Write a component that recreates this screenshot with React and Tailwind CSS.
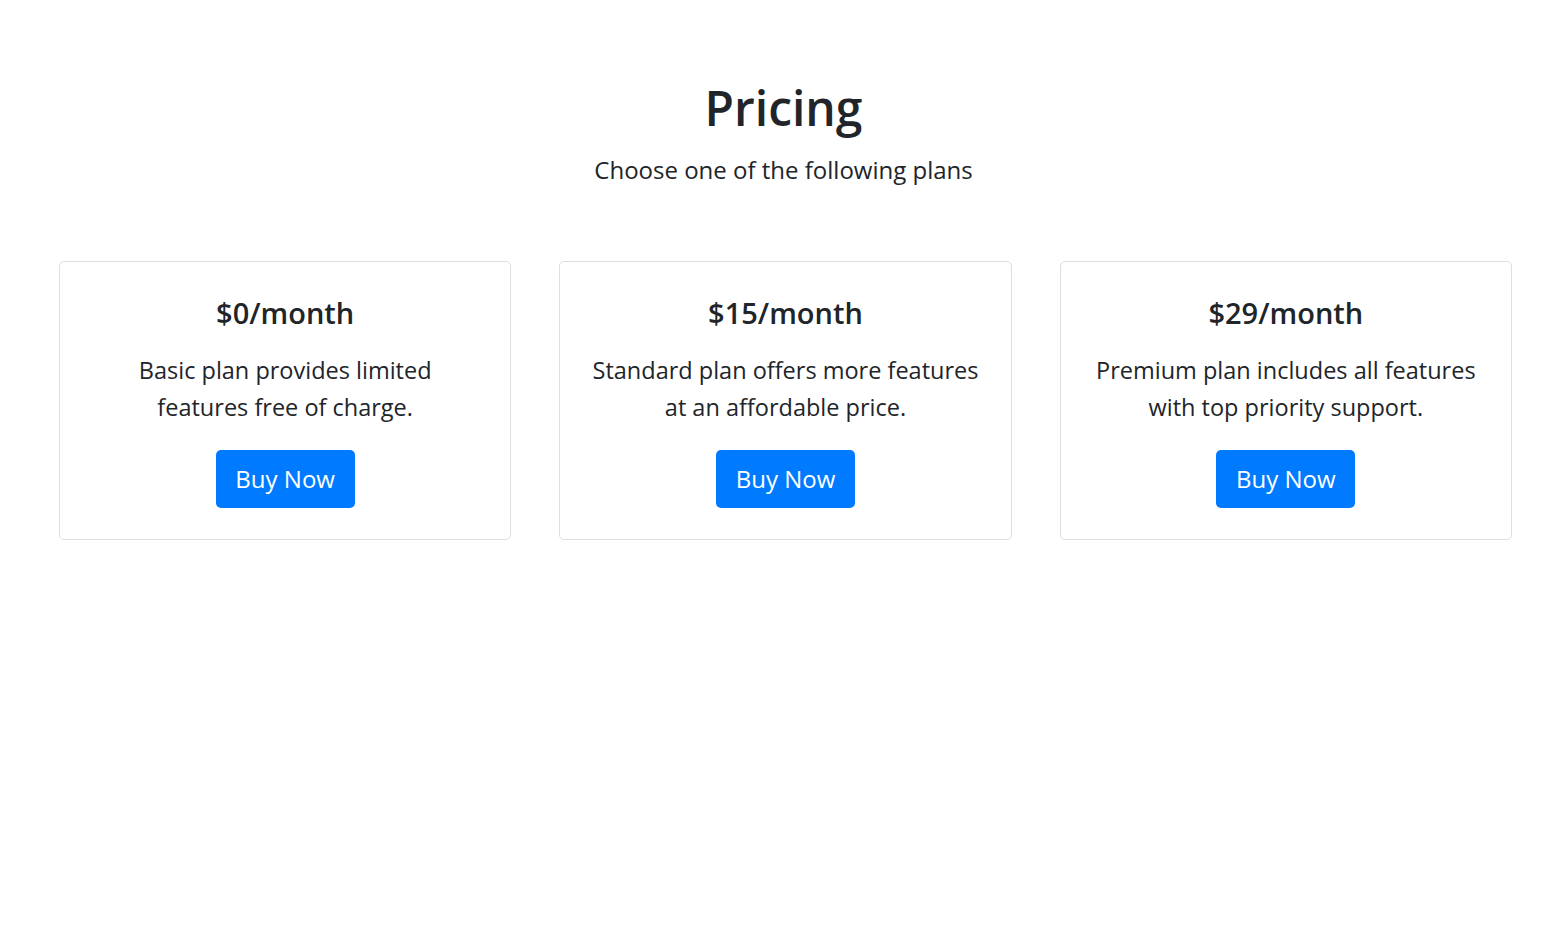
import React from "react";

const plans = [
  { price: "$0/month", desc: ["Basic plan provides limited", "features free of charge."] },
  { price: "$15/month", desc: ["Standard plan offers more features", "at an affordable price."] },
  { price: "$29/month", desc: ["Premium plan includes all features", "with top priority support."] },
];

export default function App() {
  return (
    <div className="min-h-screen bg-white text-[#212529]" style={{ fontFamily: '"Open Sans", "Noto Sans", sans-serif' }}>
      <div className="pt-[77px] text-center">
        <h1 className="text-[48px] leading-[62px] font-semibold">Pricing</h1>
        <p className="mt-[13px] text-[24px] leading-[36px] font-normal">Choose one of the following plans</p>
      </div>
      <div className="mt-[73px] grid grid-cols-3 gap-[48px] pl-[59px] pr-[55px]">
        {plans.map((p) => (
          <div key={p.price} className="h-[279px] rounded-[5px] border border-[#dfdfdf] text-center pt-[33px]">
            <h4 className="text-[29px] leading-[35px] font-semibold">{p.price}</h4>
            <p className="mt-[22px] text-[23.5px] leading-[37px]">
              {p.desc[0]}
              <br />
              {p.desc[1]}
            </p>
            <button className="mt-[24px] h-[58px] w-[139px] rounded-[5px] bg-[#007bff] text-white text-[24px]">Buy Now</button>
          </div>
        ))}
      </div>
    </div>
  );
}
